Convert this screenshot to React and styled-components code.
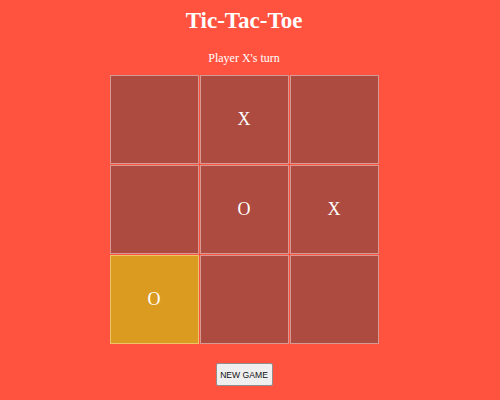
import React, { useState } from 'react';
import styled, { createGlobalStyle } from 'styled-components';

const GlobalStyle = createGlobalStyle`
  html, body {
    margin: 0;
    padding: 0;
    background: #ff5340;
  }
  body {
    font-family: 'Liberation Serif', 'Times New Roman', serif;
  }
`;

const Page = styled.div`
  width: 488px;
  display: flex;
  flex-direction: column;
  align-items: center;
  color: #fff;
`;

const Title = styled.h1`
  margin: 8px 0 0;
  font-size: 23px;
  line-height: 26px;
  font-weight: 700;
`;

const Status = styled.p`
  margin: 17px 0 0;
  font-size: 12px;
  line-height: 14px;
`;

const Board = styled.div`
  margin-top: 10px;
  display: grid;
  grid-template-columns: repeat(3, 89px);
  grid-auto-rows: 89px;
  gap: 1px;
`;

const Cell = styled.button`
  box-sizing: border-box;
  border: 1px solid ${(props) => (props.$win ? '#ecc56a' : '#d49a93')};
  background: ${(props) => (props.$win ? '#da9b20' : '#ae4b40')};
  color: #fff;
  font-family: 'Liberation Serif', 'Times New Roman', serif;
  font-size: 18px;
  padding: 0;
  display: flex;
  align-items: center;
  justify-content: center;
  cursor: pointer;
`;

const NewGame = styled.button`
  box-sizing: border-box;
  margin-top: 19px;
  width: 57px;
  height: 23px;
  padding: 0;
  font-family: 'Liberation Sans', Arial, sans-serif;
  font-size: 8.6px;
  color: #111;
  background: #efefef;
  border: 1px solid #8f8f8f;
  border-radius: 2px;
  cursor: pointer;
`;

const initial = ['', 'X', '', '', 'O', 'X', 'O', '', ''];

const App = () => {
  const [cells, setCells] = useState(initial);
  const [turn, setTurn] = useState('X');

  const play = (i) => {
    if (cells[i]) return;
    const next = cells.slice();
    next[i] = turn;
    setCells(next);
    setTurn(turn === 'X' ? 'O' : 'X');
  };

  const reset = () => {
    setCells(Array(9).fill(''));
    setTurn('X');
  };

  return (
    <>
      <GlobalStyle />
      <Page>
        <Title>Tic-Tac-Toe</Title>
        <Status>Player {turn}'s turn</Status>
        <Board>
          {cells.map((value, i) => (
            <Cell key={i} $win={i === 6 && cells === initial} onClick={() => play(i)}>
              {value}
            </Cell>
          ))}
        </Board>
        <NewGame onClick={reset}>NEW GAME</NewGame>
      </Page>
    </>
  );
};

export default App;
